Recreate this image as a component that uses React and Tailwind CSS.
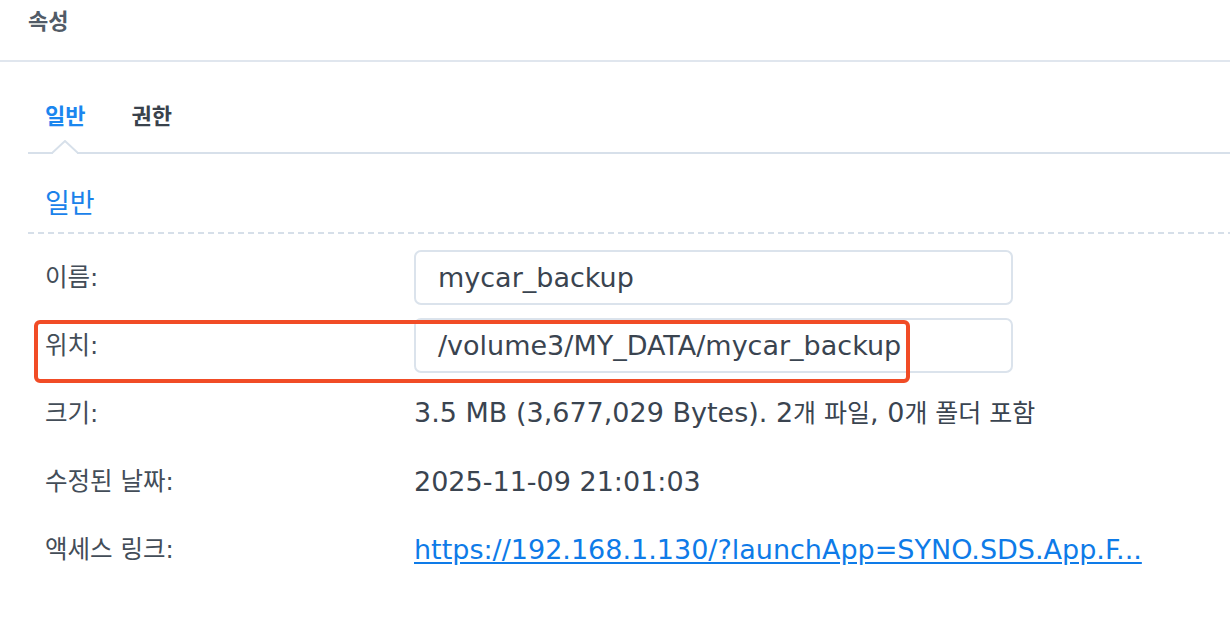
export default function App() {
  const font = "font-['DejaVu_Sans','Noto_Sans_CJK_KR',sans-serif]";
  const labelCls = "text-[24.5px] text-[#434d58] leading-[30px]";
  const valueCls = "text-[27px] text-[#3a4450] leading-[32px] whitespace-nowrap";
  const ko = "text-[25px]";
  return (
    <div className={`relative w-[1230px] h-[630px] bg-white overflow-hidden ${font}`}>
      {/* Title bar */}
      <div className="h-[62px] pl-[28px] pt-[8px] border-b-2 border-[#e0e6ee]">
        <div className="text-[22px] leading-[28px] font-bold text-[#515b67]">속성</div>
      </div>

      <div className="pl-[28px]">
        {/* Tabs */}
        <div className="relative h-[92px] pt-[41px] border-b-2 border-[#d7e0ea] flex gap-[46px] pl-[17px]">
          <div className="text-[22px] leading-[28px] font-bold text-[#1b86ef]">일반</div>
          <div className="text-[22px] leading-[28px] font-bold text-[#39424c]">권한</div>
          <svg className="absolute left-[24px] bottom-[-2px]" width="26" height="14" viewBox="0 0 26 14">
            <rect x="1" y="11" width="24" height="3" fill="#ffffff" />
            <polyline points="0,13 13,1 26,13" fill="none" stroke="#d7e0ea" strokeWidth="2" />
          </svg>
        </div>

        {/* Section header */}
        <div className="pt-[33px]">
          <div className="pl-[17px] text-[27px] leading-[34px] text-[#1a82ea]">일반</div>
          <div className="mt-[11px] h-[2px] bg-[linear-gradient(to_right,#d6dfe9_6px,transparent_6px)] bg-[length:10px_2px]" />
        </div>

        {/* Rows */}
        <div className="mt-[16px] pl-[17px] grid grid-cols-[369px_1fr] auto-rows-[55px] gap-y-[13px]">
          <div className="flex items-center"><span className={labelCls}>이름:</span></div>
          <div className="flex items-center">
            <div className="w-[599px] h-[55px] border-2 border-[#dbe3ec] rounded-[7px] pl-[22px] flex items-center">
              <span className={valueCls}>mycar_backup</span>
            </div>
          </div>

          <div className="flex items-center"><span className={labelCls}>위치:</span></div>
          <div className="flex items-center">
            <div className="w-[599px] h-[55px] border-2 border-[#dbe3ec] rounded-[7px] pl-[22px] flex items-center">
              <span className={valueCls}>/volume3/MY_DATA/mycar_backup</span>
            </div>
          </div>

          <div className="flex items-center"><span className={labelCls}>크기:</span></div>
          <div className="flex items-center">
            <span className={valueCls}>
              3.5 MB (3,677,029 Bytes). 2<span className={ko}>개 파일</span>, 0<span className={ko}>개 폴더 포함</span>
            </span>
          </div>

          <div className="flex items-center"><span className={labelCls}>수정된 날짜:</span></div>
          <div className="flex items-center">
            <span className={valueCls}>2025-11-09 21:01:03</span>
          </div>

          <div className="flex items-center"><span className={labelCls}>액세스 링크:</span></div>
          <div className="flex items-center">
            <a className="text-[27px] leading-[32px] text-[#0e7be8] underline underline-offset-[3px] whitespace-nowrap" href="#">
              https://192.168.1.130/?launchApp=SYNO.SDS.App.F...
            </a>
          </div>
        </div>
      </div>

      {/* Highlight annotation */}
      <div className="absolute left-[34px] top-[320px] w-[876px] h-[63px] border-4 border-[#f14c26] rounded-[6px] pointer-events-none" />
    </div>
  );
}
